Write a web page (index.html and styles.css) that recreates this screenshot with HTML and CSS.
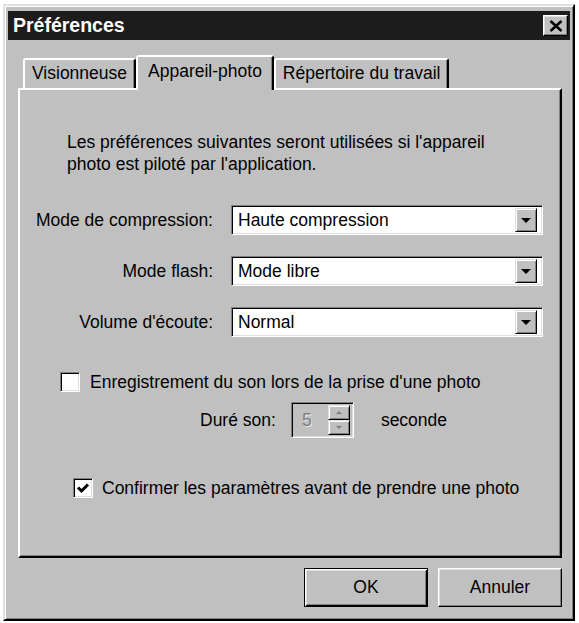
FILE: index.html
```html
<!DOCTYPE html>
<html lang="fr">
<head>
<meta charset="utf-8">
<title>Préférences</title>
<link rel="stylesheet" href="styles.css">
</head>
<body>
<div class="window">
  <div class="titlebar">
    <span class="title">Préférences</span>
    <span class="close"><svg width="14" height="12" viewBox="0 0 14 12"><path d="M1.5 1 L12.5 11 M12.5 1 L1.5 11" stroke="#000" stroke-width="2.6" fill="none"/></svg></span>
  </div>
  <div class="tabs">
    <div class="tab">Visionneuse</div>
    <div class="tab active">Appareil-photo</div>
    <div class="tab">Répertoire du travail</div>
  </div>
  <div class="panel">
    <p class="intro">Les préférences suivantes seront utilisées si l'appareil<br>photo est piloté par l'application.</p>
    <div class="form">
      <span class="lbl">Mode de compression:</span>
      <div class="combo"><span class="val">Haute compression</span><span class="drop"></span></div>
      <span class="lbl">Mode flash:</span>
      <div class="combo"><span class="val">Mode libre</span><span class="drop"></span></div>
      <span class="lbl">Volume d'écoute:</span>
      <div class="combo"><span class="val">Normal</span><span class="drop"></span></div>
    </div>
    <div class="check-row first">
      <span class="cb"></span>
      <span>Enregistrement du son lors de la prise d'une photo</span>
    </div>
    <div class="dur-row">
      <span>Duré son:</span>
      <div class="spin">
        <span class="num">5</span>
        <span class="arrows">
          <span class="sbtn up"></span>
          <span class="sbtn down"></span>
        </span>
      </div>
      <span>seconde</span>
    </div>
    <div class="check-row second">
      <span class="cb"><svg width="14" height="14" viewBox="0 0 14 14"><path d="M2 6.5 L5.5 10 L12 3.5" fill="none" stroke="#000" stroke-width="3"/></svg></span>
      <span>Confirmer les paramètres avant de prendre une photo</span>
    </div>
  </div>
  <div class="buttons">
    <button class="btn default">OK</button>
    <button class="btn">Annuler</button>
  </div>
</div>
</body>
</html>
```
FILE: styles.css
```css
* { box-sizing: border-box; }
html, body { margin: 0; padding: 0; background: #fff; }
body {
  font-family: "Liberation Sans", Arial, sans-serif;
  font-size: 17.5px;
  color: #000;
}
.window {
  margin: 4px 0 0 3px;
  width: 572px;
  height: 617px;
  background: #c0c0c0;
  border: 2px solid;
  border-color: #dfdfdf #000 #000 #dfdfdf;
  box-shadow: inset 1px 1px #fff, inset -1px -1px #808080;
  padding: 5px 3px 0 3px;
  display: flex;
  flex-direction: column;
}
.titlebar {
  flex: none;
  height: 29px;
  background: #1c1c1c;
  display: flex;
  align-items: center;
  justify-content: space-between;
  padding: 0 2px 0 5px;
}
.title {
  color: #fff;
  font-weight: bold;
  font-size: 19.5px;
}
.close {
  width: 25px;
  height: 21px;
  background: #c0c0c0;
  border: 1px solid;
  border-color: #fff #000 #000 #fff;
  box-shadow: inset -1px -1px #808080, inset 1px 1px #dfdfdf;
  display: flex;
  align-items: center;
  justify-content: center;
}
.tabs {
  flex: none;
  display: flex;
  align-items: flex-end;
  height: 33px;
  margin: 15px 0 0 15px;
  position: relative;
  z-index: 1;
}
.tab {
  height: 30px;
  padding: 0 7px 1px;
  border: 2px solid;
  border-bottom: 0;
  border-color: #fff #000 transparent #fff;
  border-radius: 3px 3px 0 0;
  box-shadow: inset -1px 0 #808080;
  display: flex;
  align-items: center;
  background: #c0c0c0;
}
.tab.active {
  height: 35px;
  margin-bottom: -2px;
  padding: 0 10px 5px;
}
.panel {
  flex: none;
  height: 470px;
  margin: 0 8px 0 10px;
  border: 2px solid;
  border-color: #fff #000 #000 #fff;
  box-shadow: inset -1px -1px #808080;
}
.intro {
  margin: 41px 0 0 47px;
  line-height: 22px;
}
.form {
  display: grid;
  grid-template-columns: 193px 312px;
  column-gap: 18px;
  row-gap: 21px;
  margin-top: 30px;
  align-items: center;
}
.lbl { justify-self: end; }
.combo {
  height: 30px;
  background: #fff;
  border: 1px solid;
  border-color: #808080 #fff #fff #808080;
  box-shadow: inset 1px 1px #000, inset -1px -1px #dfdfdf;
  padding: 2px 5px 2px 2px;
  display: flex;
  align-items: center;
}
.val { flex: 1; padding-left: 4px; }
.drop {
  width: 22px;
  height: 24px;
  background: #c0c0c0;
  border: 1px solid;
  border-color: #dfdfdf #000 #000 #dfdfdf;
  box-shadow: inset 1px 1px #fff, inset -1px -1px #808080;
  display: flex;
  align-items: center;
  justify-content: center;
}
.drop::after {
  content: "";
  border-left: 5px solid transparent;
  border-right: 5px solid transparent;
  border-top: 5px solid #000;
}
.check-row {
  display: flex;
  align-items: center;
  gap: 10px;
  height: 20px;
}
.check-row.first { margin: 35px 0 0 40px; }
.check-row.second { margin: 40px 0 0 53px; gap: 9px; }
.cb {
  width: 20px;
  height: 20px;
  flex: none;
  background: #fff;
  border: 1px solid;
  border-color: #808080 #fff #fff #808080;
  box-shadow: inset 1px 1px #000, inset -1px -1px #dfdfdf;
  display: flex;
  align-items: center;
  justify-content: center;
}
.dur-row {
  display: flex;
  align-items: center;
  height: 36px;
  margin: 10px 0 0 180px;
}
.spin {
  width: 63px;
  height: 36px;
  margin: 0 27px 0 15px;
  background: #c0c0c0;
  border: 1px solid;
  border-color: #808080 #fff #fff #808080;
  box-shadow: inset 1px 1px #000, inset -1px -1px #dfdfdf;
  padding: 2px 3px 2px 2px;
  display: flex;
}
.num {
  flex: 1;
  padding-left: 8px;
  color: #808080;
  display: flex;
  align-items: center;
  text-shadow: 1px 1px #e8e8e8;
}
.arrows {
  width: 22px;
  display: flex;
  flex-direction: column;
}
.sbtn {
  flex: 1;
  background: #c0c0c0;
  border: 1px solid;
  border-color: #dfdfdf #000 #000 #dfdfdf;
  box-shadow: inset 1px 1px #fff, inset -1px -1px #808080;
  display: flex;
  align-items: center;
  justify-content: center;
}
.sbtn.up::after {
  content: "";
  border-left: 3px solid transparent;
  border-right: 3px solid transparent;
  border-bottom: 3px solid #808080;
}
.sbtn.down::after {
  content: "";
  border-left: 3px solid transparent;
  border-right: 3px solid transparent;
  border-top: 3px solid #808080;
}
.buttons {
  flex: none;
  display: flex;
  justify-content: flex-end;
  gap: 10px;
  margin: 10px 8px 0 0;
}
.btn {
  width: 124px;
  height: 39px;
  font: inherit;
  color: #000;
  background: #c0c0c0;
  border: 1px solid;
  border-color: #fff #000 #000 #fff;
  box-shadow: inset -1px -1px #808080, inset 1px 1px #dfdfdf;
  padding: 0;
}
.btn.default {
  border: 1px solid #000;
  box-shadow: inset 1px 1px #fff, inset -1px -1px #000, inset 2px 2px #dfdfdf, inset -2px -2px #808080;
}
```
